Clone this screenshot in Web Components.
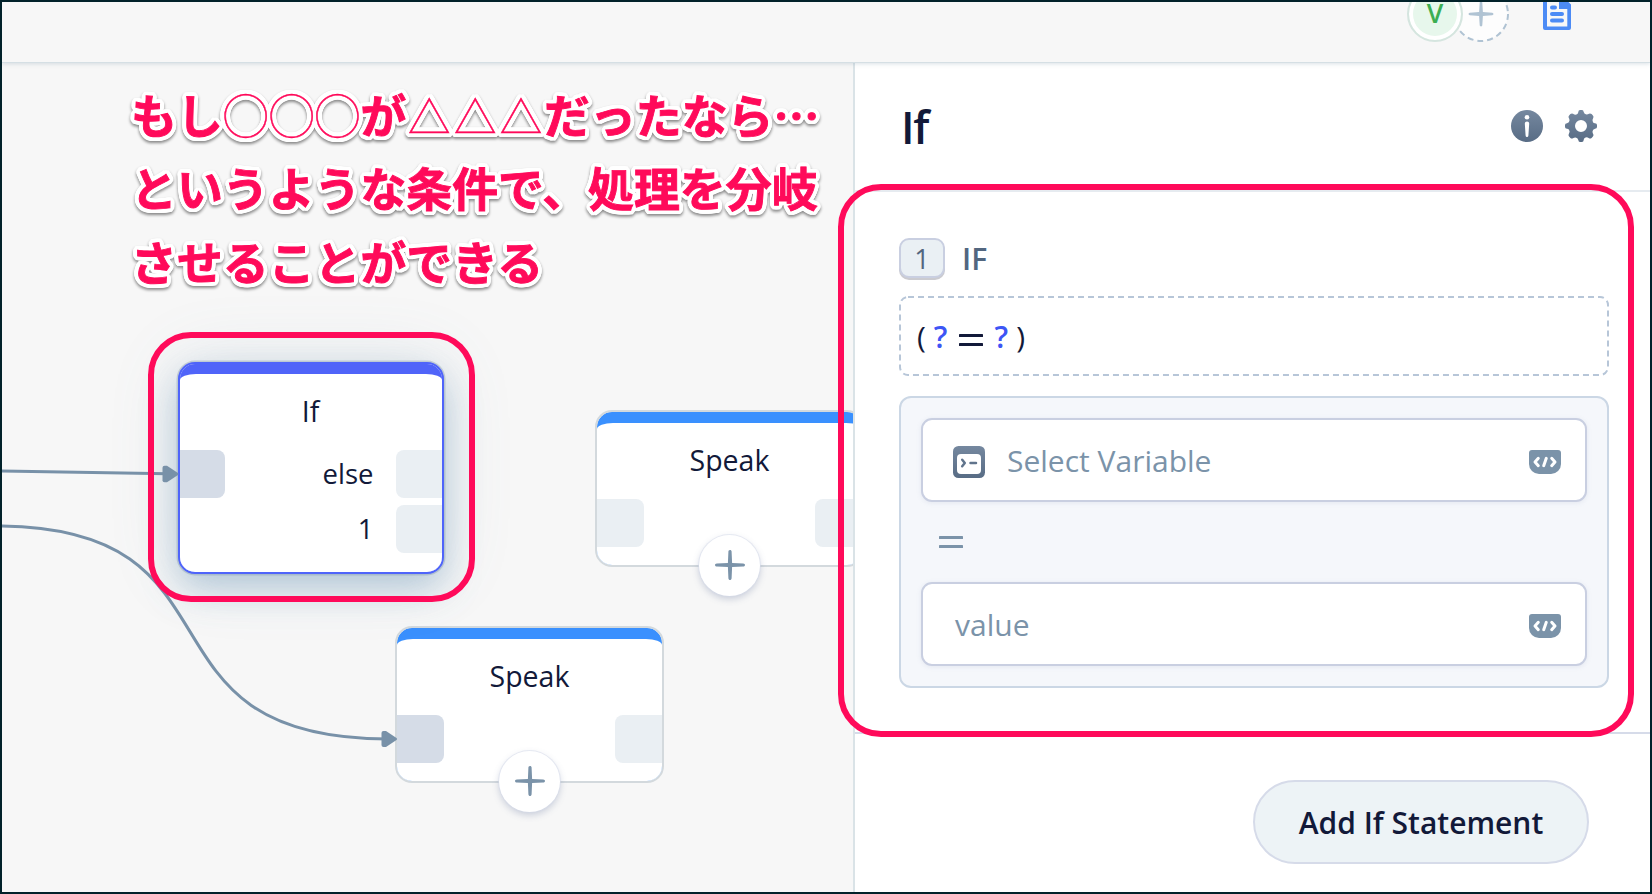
<!DOCTYPE html>
<html lang="ja">
<head>
<meta charset="utf-8">
<title>Flow editor</title>
<style>
html, body { margin: 0; height: 100%; overflow: hidden; }
body { font-family: "Open Sans", "Noto Sans CJK JP", sans-serif; color: #121939; }
</style>
</head>
<body>
<flow-app></flow-app>
<script>
const define = (name, html) => {
  const t = document.createElement('template');
  t.innerHTML = html;
  customElements.define(name, class extends HTMLElement {
    constructor() {
      super();
      this.attachShadow({ mode: 'open' }).append(t.content.cloneNode(true));
    }
  });
};

define('plus-icon', `
<style>:host{display:block;width:30px;height:30px;color:#7b93a9} svg{display:block;width:100%;height:100%}</style>
<svg viewBox="0 0 30 30" fill="currentColor"><path d="M15 0c1 0 1.700.8 1.600 1.800L17.100 12.900 28.200 13.400c2.400.100 2.400 3.100 0 3.200L17.100 17.100 16.600 28.200c-.1 2.400-3.100 2.400-3.200 0L12.900 17.100 1.800 16.600c-2.400-.1-2.400-3.100 0-3.200L12.900 12.900 13.400 1.800C13.400.8 14 0 15 0z"/></svg>`);

define('equals-icon', `
<style>:host{display:block;width:24px;height:12px} svg{display:block}</style>
<svg width="24" height="12" fill="currentColor"><rect width="24" height="3" rx=".6"/><rect y="9" width="24" height="3" rx=".6"/></svg>`);

define('top-bar', `
<style>
:host{display:flex;justify-content:flex-end;align-items:flex-end;box-sizing:border-box;height:61px;padding:0 79px 20px 0;background:#f7f7f7;border-bottom:1px solid #d5dfe4;box-shadow:0 1px 4px rgba(110,140,160,.25);position:relative;z-index:3}
.bar{display:flex;align-items:flex-end;height:40px}
.me{box-sizing:border-box;width:56px;height:56px;flex:none;border-radius:50%;border:2px solid #d5e5df;background:#e7f7ec;box-shadow:inset 0 0 0 4px #fff;display:grid;place-items:center;color:#3cae52;font:600 26.500px/1 "Open Sans",sans-serif;padding-bottom:1px;position:relative;z-index:1}
.add{display:block;margin-left:-10px;flex:none}
.doc{display:block;margin:0 0 12px 34px;flex:none}
</style>
<div class="bar">
<div class="me">V</div>
<svg class="add" width="56" height="56"><circle cx="28" cy="28" r="27" fill="#fff" fill-opacity=".75" stroke="#b0c3d3" stroke-width="2" stroke-dasharray="6 4"/><path fill="#b0c3d3" d="M28 15.500c.9 0 1.300.6 1.300 1.300l.6 9.300 9.300.7c1.600.200 1.600 2.200 0 2.400l-9.300.7-.6 9.300c-.2 1.600-2.400 1.600-2.600 0l-.6-9.300-9.300-.7c-1.600-.2-1.600-2.200 0-2.400l9.300-.7.6-9.300c0-.7.4-1.300 1.300-1.300z"/></svg>
<svg class="doc" width="28" height="36" fill="#4c8bf5"><path fill-rule="evenodd" d="M2 0H17.500L28 10.500V34q0 2-2 2H2q-2 0-2-2V2Q0 0 2 0zM4 3.500V32.500H24.300V15H16V3.500z"/><rect x="7" y="11.500" width="7" height="4" rx="2"/><rect x="7" y="18" width="14" height="4" rx="2"/><rect x="7" y="24.500" width="14" height="4" rx="2"/></svg>
</div>`);

define('flow-node', `
<style>
:host{display:block;position:absolute;box-sizing:border-box;width:269px;height:157px;--bar:#3a90fe;--line:#d3d9dd;--port:47px}
.card{box-sizing:border-box;width:100%;height:100%;border:2px solid var(--line);border-radius:17px;overflow:hidden;background:var(--bar);background-clip:padding-box}
.body{height:100%;box-sizing:border-box;margin-top:11px;background:#fff;border-radius:16px 16px 0 0/6px 6px 0 0;padding-top:18px;text-align:center;font-size:28.500px;line-height:38px}
:host([selected]){width:266px;height:212px;--bar:#5064f9;--port:46px;--port-in:45px}
:host([selected]) .body{margin-top:10px}
:host([selected]) .card{border:2px solid #4f64fa;box-shadow:0 0 0 1.500px rgba(120,145,165,.35),0 15px 36px rgba(100,145,180,.42),0 0 72px rgba(100,135,160,.14)}
</style>
<div class="card"><div class="body"><slot></slot><slot name="ports"></slot></div></div><slot name="action"></slot>`);

define('node-ports', `
<style>
:host{display:flex;justify-content:space-between;margin-top:20px;font-size:27.500px;line-height:48px;--in:#d5dce7}
:host([idle]){--in:#eaeff3}
.in,.out{width:var(--port);height:48px}
.in{width:var(--port-in,var(--port));background:var(--in);border-radius:0 8px 8px 0}
.outs{display:flex;flex-direction:column;gap:7px}
.row{display:flex;justify-content:flex-end;gap:22px}
.out{background:#eaeff3;border-radius:8px 0 0 8px}
</style>
<div class="in"></div>
<div class="outs"><div class="row"><slot name="a"></slot><div class="out"></div></div><slot name="more"></slot></div>`);

define('node-row', `
<style>:host{display:flex;justify-content:flex-end;gap:22px} .out{width:var(--port);height:48px;background:#eaeff3;border-radius:8px 0 0 8px}</style>
<span><slot></slot></span><div class="out"></div>`);

define('add-button', `
<style>:host{position:absolute;left:50%;bottom:-28.500px;margin-left:-30.500px;width:61px;height:61px;border-radius:50%;background:#fff;display:grid;place-items:center;box-shadow:0 0 0 1px rgba(215,220,235,.55),0 3px 7px rgba(90,105,150,.3)}</style>
<plus-icon></plus-icon>`);

define('flow-canvas', `
<style>
:host{display:block;position:relative;overflow:hidden;background:#f7f7f7}
.edges{position:absolute;left:-2px;top:-63px;z-index:1;pointer-events:none}
</style>
<flow-node style="left:593px;top:347px">Speak<node-ports slot="ports" idle></node-ports><add-button slot="action"></add-button></flow-node>
<flow-node style="left:393px;top:563px">Speak<node-ports slot="ports"></node-ports><add-button slot="action"></add-button></flow-node>
<flow-node selected style="left:175.500px;top:299px">If<node-ports slot="ports"><span slot="a">else</span><node-row slot="more">1</node-row></node-ports></flow-node>
<svg class="edges" width="855" height="894" fill="none" stroke="#7891a8" stroke-width="3">
<path d="M0 471 L168 473.700"/><path d="M-4 526C257 526 123 739 388 739"/>
<g fill="#7891a8" stroke="none"><path d="M162.500 467.800q0-2 2-2h2.500l11 7.200q1.200 1 0 2l-11 7.200H164.500q-2 0-2-2z"/><path d="M381.500 733q0-2 2-2h2.500l10.500 7q1.200 1 0 2l-10.500 7H383.500q-2 0-2-2z"/></g>
</svg>`);

define('panel-header', `
<style>
:host{display:flex;align-items:center;gap:22px;box-sizing:border-box;height:129px;padding:0 53px 1px 46px;border-bottom:2px solid #e6ebf0}
h1{margin:0 auto 0 0;font-weight:600;font-size:44.500px;line-height:60px;letter-spacing:-1.300px;padding-top:1px}
svg{display:block}
</style>
<h1><slot></slot></h1>
<svg width="32" height="32"><defs><linearGradient id="g" x2="0" y2="1"><stop stop-color="#75889f"/><stop offset="1" stop-color="#586c85"/></linearGradient></defs><circle cx="16" cy="16" r="16" fill="url(#g)"/><circle cx="16" cy="7.300" r="2.300" fill="#fff"/><path fill="#fff" d="M13.800 13.500q0-2 2.200-2t2.200 2l-.8 12q-.1 1.600-1.400 1.600t-1.400-1.600z"/></svg>
<svg width="32" height="32" viewBox="-16 -16 32 32"><defs><linearGradient id="h" gradientUnits="userSpaceOnUse" x1="0" y1="-16" x2="0" y2="16"><stop stop-color="#75889f"/><stop offset="1" stop-color="#586c85"/></linearGradient></defs>
<path fill="url(#h)" fill-rule="evenodd" d="M-2.700-14Q-2.500-16-1-16H1Q2.500-16 2.700-14Q3.300-11.600 5.500-11.500Q7.200-11.500 8-12.200Q9.200-13 10.600-11.900L11.900-10.600Q13-9.200 12.200-8Q10.600-5.500 12-3.700Q12.600-2.800 14-2.700Q16-2.500 16-1V1Q16 2.500 14 2.700Q11.600 3.300 11.500 5.500Q11.500 7.200 12.200 8Q13 9.200 11.900 10.600L10.600 11.900Q9.200 13 8 12.200Q5.500 10.600 3.700 12Q2.800 12.600 2.700 14Q2.500 16 1 16H-1Q-2.500 16-2.700 14Q-3.300 11.600-5.500 11.500Q-7.200 11.500-8 12.200Q-9.200 13-10.600 11.900L-11.900 10.600Q-13 9.200-12.200 8Q-10.600 5.500-12 3.700Q-12.600 2.800-14 2.700Q-16 2.500-16 1V-1Q-16-2.500-14-2.700Q-11.600-3.300-11.500-5.500Q-11.500-7.200-12.200-8Q-13-9.200-11.900-10.600L-10.600-11.900Q-9.200-13-8-12.200Q-5.500-10.600-3.700-12Q-2.800-12.600-2.700-14zM0-6A6 6 0 1 0 0 6A6 6 0 1 0 0-6z"/></svg>`);

define('key-badge', `
<style>:host{display:block;box-sizing:border-box;width:46px;height:40px;border:2px solid #c9cfe1;border-radius:10px;background:#eaf0f4;box-shadow:0 2px 0 #cbcbd0;text-align:center;font-weight:500;font-size:27px;line-height:37px;color:#52667f}</style><slot></slot>`);

define('formula-box', `
<style>
:host{display:flex;align-items:center;position:relative;box-sizing:border-box;height:80px;padding:2px 0 0 18px;font-size:30px;line-height:40px}
svg{position:absolute;inset:0;width:100%;height:100%}
b{font-weight:600;color:#3d55f5}
equals-icon{margin:5px 12px 0 11px}
.p{margin-right:8px}.q{margin-left:8px}
</style>
<svg><rect x="1" y="1" style="width:calc(100% - 2px);height:calc(100% - 2px)" rx="8" fill="none" stroke="#b7c6d8" stroke-width="2" stroke-dasharray="6 4"/></svg>
<span class="p">(</span><b>?</b><equals-icon></equals-icon><b>?</b><span class="q">)</span>`);

define('field-box', `
<style>
:host{display:flex;align-items:center;box-sizing:border-box;height:84px;padding:4px 24px 0 30px;border:2px solid #c9cfe1;border-radius:11px;background:#fff;box-shadow:0 1px 5px rgba(130,145,180,.14);color:#7b93a9;font-size:30px;line-height:40px}
span{flex:1;margin-top:-2px} svg{display:block}
:host([plain]) span{padding-left:2px}
</style>
<slot name="icon"></slot><span><slot></slot></span>
<svg width="32" height="24"><path fill="#7b93a9" d="M3 0H29A3 3 0 0 1 32 3V14A10 10 0 0 1 22 24H10A10 10 0 0 1 0 14V3A3 3 0 0 1 3 0z"/><g fill="none" stroke="#fff" stroke-width="3" stroke-linecap="round" stroke-linejoin="round"><path d="M9.300 8.300 6 12 9.300 15.700M22.700 8.300 26 12 22.700 15.700M17.300 8.300 14.700 15.700"/></g></svg>`);

define('terminal-icon', `
<style>:host{display:block;margin-right:22px} svg{display:block}</style>
<svg width="32" height="32"><defs><linearGradient id="g" x2="0" y2="1"><stop stop-color="#75889f"/><stop offset="1" stop-color="#586c85"/></linearGradient></defs><rect width="32" height="32" rx="5.500" fill="url(#g)"/><rect x="4" y="8" width="24" height="20" rx="4" fill="#fff"/><path d="M9.200 13.800 11.800 17 9.200 20.200M17.500 17H23" fill="none" stroke="#60748c" stroke-width="2.500" stroke-linecap="round" stroke-linejoin="round"/></svg>`);

define('condition-box', `
<style>
:host{display:flex;flex-direction:column;box-sizing:border-box;height:292px;padding:20px;border:2px solid #cbd7e5;border-radius:12px;background:#f5f7fb}
.op{height:80px;display:flex;align-items:center;padding-left:18px;color:#7b93a9}
</style>
<field-box><terminal-icon slot="icon"></terminal-icon>Select Variable</field-box>
<div class="op"><equals-icon></equals-icon></div>
<field-box plain>value</field-box>`);

define('pill-button', `
<style>:host{display:block;box-sizing:border-box;width:336px;height:84px;border:2px solid #d6dbe9;border-radius:42px;background:#edf3f6;text-align:center;font-weight:600;font-size:30px;line-height:82px}</style><slot></slot>`);

define('side-panel', `
<style>
:host{display:flex;flex-direction:column;background:#fff;border-left:2px solid #dae3e7}
.statement{box-sizing:border-box;height:542px;padding:46px 41px 0 44px;border-bottom:2px solid #d6dbe9}
.head{display:flex;align-items:center;gap:17px;height:40px;margin-bottom:18px;font-size:30px;font-weight:600;line-height:40px;color:#52667f}
.head span{padding-top:2px}
condition-box{margin-top:20px}
.foot{display:flex;justify-content:flex-end;padding:46px 61px 0 0}
</style>
<panel-header>If</panel-header>
<div class="statement">
<div class="head"><key-badge>1</key-badge><span>IF</span></div>
<formula-box></formula-box>
<condition-box></condition-box>
</div>
<div class="foot"><pill-button>Add If Statement</pill-button></div>`);

define('callout-frame', `<style>:host{display:block;position:absolute;box-sizing:border-box;border:6px solid #ff0a5a;border-radius:43px;z-index:5}</style>`);

/* The halo is a ring of hard white shadows, which keeps its corners round. */
const ring = (n, r) => Array.from({ length: n }, (_, i) => {
  const a = i * 2 * Math.PI / n;
  return `${(r * Math.cos(a)).toFixed(2)}px ${(r * Math.sin(a)).toFixed(2)}px 0 #fff`;
});
const halo = [...ring(24, 4.3), ...ring(8, 2)].join(',');

define('callout-text', `
<style>
:host{display:block;position:absolute;left:131px;top:77px;z-index:5;white-space:nowrap;font:700 45.900px/73.300px "Noto Sans CJK JP",sans-serif;color:#ff0a5a;-webkit-text-stroke:.9px #ff0a5a;text-shadow:${halo};filter:drop-shadow(0 2px 1.500px rgba(0,0,0,.45))}
i{font-style:normal;font-weight:100;-webkit-text-stroke-width:.5px}
.tri{font-size:42.500px;letter-spacing:3.400px;margin:0 -1.700px 0 1.700px;line-height:1}
</style>
<div>もし<i>◯◯◯</i>が<i class="tri">△△△</i>だったなら…</div><div>というような条件で、処理を分岐</div><div>させることができる</div>`);

define('flow-app', `
<style>
:host{display:grid;grid-template:61px 1fr/851px 1fr;position:relative;box-sizing:border-box;height:100vh;border:2px solid #02222a;overflow:hidden}
top-bar{grid-column:1/3}
callout-text,callout-frame{margin:-2px 0 0 -2px}
</style>
<top-bar></top-bar>
<flow-canvas></flow-canvas>
<side-panel></side-panel>
<callout-text></callout-text>
<callout-frame style="left:148px;top:332px;width:326.500px;height:269.700px"></callout-frame>
<callout-frame style="left:838px;top:184px;width:796px;height:552.600px"></callout-frame>`);
</script>
</body>
</html>
